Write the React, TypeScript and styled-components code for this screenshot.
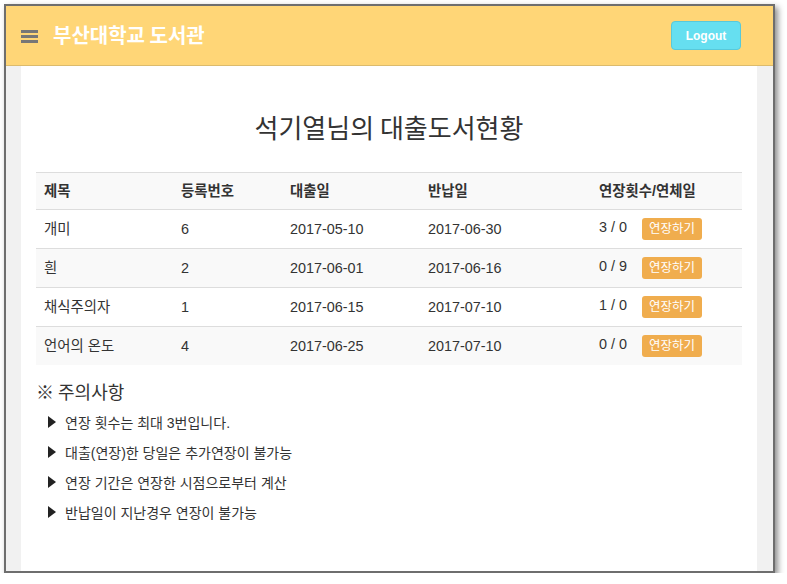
import React from "react";
import styled, { createGlobalStyle } from "styled-components";

const GlobalStyle = createGlobalStyle`
  html, body { margin: 0; padding: 0; background: #fff; }
  body {
    font-family: "Liberation Sans", "Noto Sans CJK KR", sans-serif;
    color: #333;
  }
`;

const Window = styled.div`
  margin: 4px 0 0 4px;
  width: 767px;
  height: 565px;
  border: 2px solid #6e6e6e;
  box-shadow: 3px 3px 6px rgba(0, 0, 0, 0.45);
  display: flex;
  flex-direction: column;
  background: #f1f1f1;
  overflow: hidden;
`;

const Header = styled.header`
  flex: none;
  height: 59px;
  background: #ffd677;
  border-bottom: 1px solid #dcbb6c;
  display: flex;
  align-items: center;
  padding: 0 32px 0 15px;
`;

const Burger = styled.div`
  width: 17px;
  display: flex;
  flex-direction: column;
  gap: 2px;
  margin-top: 1px;
  span {
    display: block;
    height: 3px;
    background: #777;
  }
`;

const Brand = styled.h1`
  margin: -3px 0 0 15px;
  font-family: "Noto Sans CJK KR", sans-serif;
  font-size: 20px;
  font-weight: 700;
  color: #fff;
  flex: 1;
`;

const LogoutButton = styled.button`
  width: 70px;
  height: 29px;
  background: #66dff0;
  border: 1px solid #58c9da;
  border-radius: 4px;
  color: #fff;
  font-family: "Liberation Sans", sans-serif;
  font-weight: 700;
  font-size: 12px;
  padding: 0;
`;

const Main = styled.main`
  flex: 1;
  padding: 0 16px 0 15px;
  display: flex;
`;

const Content = styled.section`
  flex: 1;
  background: #fff;
  padding: 44px 15px 0;
`;

const Title = styled.h2`
  margin: 0 0 28px;
  font-family: "Noto Sans CJK KR", sans-serif;
  font-size: 26px;
  line-height: 34px;
  font-weight: 400;
  text-align: center;
  color: #333;
`;

const Table = styled.table`
  width: 100%;
  border-collapse: collapse;
  table-layout: fixed;
  font-size: 14.4px;
`;

const Row = styled.tr<{ $striped?: boolean }>`
  background: ${(p) => (p.$striped ? "#f9f9f9" : "#fff")};
`;

const Cell = styled.td`
  border-top: 1px solid #ddd;
  padding: 0 8px 1px;
  height: 37px;
  line-height: 20px;
  vertical-align: middle;
  color: #333;
  white-space: nowrap;
`;

const HeadCell = styled.th`
  border-top: 1px solid #ddd;
  padding: 0 8px;
  height: 36px;
  line-height: 20px;
  vertical-align: middle;
  text-align: left;
  font-weight: 700;
  color: #333;
  white-space: nowrap;
`;

const Badge = styled.span`
  display: inline-block;
  margin-left: 15px;
  width: 60px;
  height: 22px;
  line-height: 22px;
  text-align: center;
  border-radius: 3px;
  background: #f0ad4e;
  color: #fff;
  font-size: 12.5px;
  vertical-align: middle;
`;

const NoticeTitle = styled.h3`
  margin: 13px 0 3px;
  font-family: "Noto Sans CJK KR", sans-serif;
  font-size: 18px;
  line-height: 26px;
  font-weight: 400;
  color: #333;
`;

const NoticeList = styled.ul`
  list-style: none;
  margin: 0;
  padding: 0 0 0 12px;
`;

const NoticeItem = styled.li`
  display: flex;
  align-items: center;
  gap: 9px;
  height: 30px;
  font-size: 14px;
  color: #333;
  &::before {
    content: "";
    width: 0;
    height: 0;
    border-top: 6px solid transparent;
    border-bottom: 6px solid transparent;
    border-left: 8px solid #222;
  }
`;

type Loan = {
  title: string;
  regNo: number;
  loanDate: string;
  dueDate: string;
  renewals: number;
  overdue: number;
};

const loans: Loan[] = [
  { title: "개미", regNo: 6, loanDate: "2017-05-10", dueDate: "2017-06-30", renewals: 3, overdue: 0 },
  { title: "흰", regNo: 2, loanDate: "2017-06-01", dueDate: "2017-06-16", renewals: 0, overdue: 9 },
  { title: "채식주의자", regNo: 1, loanDate: "2017-06-15", dueDate: "2017-07-10", renewals: 1, overdue: 0 },
  { title: "언어의 온도", regNo: 4, loanDate: "2017-06-25", dueDate: "2017-07-10", renewals: 0, overdue: 0 },
];

const notices = [
  "연장 횟수는 최대 3번입니다.",
  "대출(연장)한 당일은 추가연장이 불가능",
  "연장 기간은 연장한 시점으로부터 계산",
  "반납일이 지난경우 연장이 불가능",
];

export default function App() {
  return (
    <>
      <GlobalStyle />
      <Window>
        <Header>
          <Burger>
            <span />
            <span />
            <span />
          </Burger>
          <Brand>부산대학교 도서관</Brand>
          <LogoutButton>Logout</LogoutButton>
        </Header>
        <Main>
          <Content>
            <Title>석기열님의 대출도서현황</Title>
            <Table>
              <colgroup>
                <col style={{ width: 137 }} />
                <col style={{ width: 109 }} />
                <col style={{ width: 138 }} />
                <col style={{ width: 171 }} />
                <col />
              </colgroup>
              <tbody>
                <Row $striped>
                  <HeadCell>제목</HeadCell>
                  <HeadCell>등록번호</HeadCell>
                  <HeadCell>대출일</HeadCell>
                  <HeadCell>반납일</HeadCell>
                  <HeadCell>연장횟수/연체일</HeadCell>
                </Row>
                {loans.map((l, i) => (
                  <Row key={l.title} $striped={i % 2 === 1}>
                    <Cell>{l.title}</Cell>
                    <Cell>{l.regNo}</Cell>
                    <Cell>{l.loanDate}</Cell>
                    <Cell>{l.dueDate}</Cell>
                    <Cell>
                      {l.renewals} / {l.overdue}
                      <Badge>연장하기</Badge>
                    </Cell>
                  </Row>
                ))}
              </tbody>
            </Table>
            <NoticeTitle>※ 주의사항</NoticeTitle>
            <NoticeList>
              {notices.map((n) => (
                <NoticeItem key={n}>{n}</NoticeItem>
              ))}
            </NoticeList>
          </Content>
        </Main>
      </Window>
    </>
  );
}
